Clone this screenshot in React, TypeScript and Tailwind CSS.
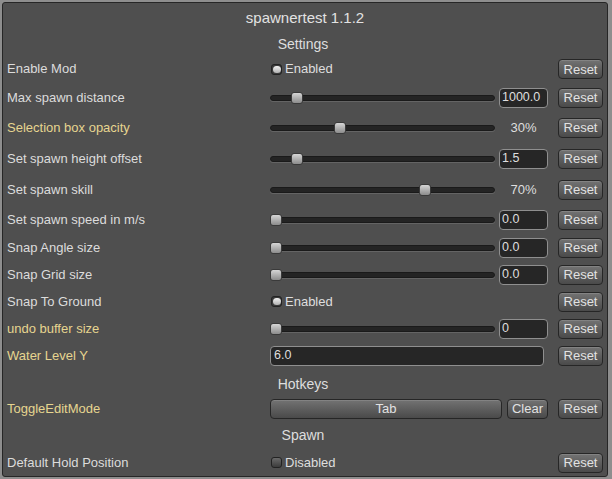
import React from "react";

type Row =
  | { kind: "toggle"; label: string; on: boolean; h: string; yellow?: boolean }
  | { kind: "slider"; label: string; pos: number; value: string; field: boolean; h: string; yellow?: boolean }
  | { kind: "text"; label: string; value: string; h: string; yellow?: boolean };

const settings: Row[] = [
  { kind: "toggle", label: "Enable Mod", on: true, h: "h-[28px]" },
  { kind: "slider", label: "Max spawn distance", pos: 0.1, value: "1000.0", field: true, h: "h-[29px]" },
  { kind: "slider", label: "Selection box opacity", pos: 0.3, value: "30%", field: false, h: "h-[31px]", yellow: true },
  { kind: "slider", label: "Set spawn height offset", pos: 0.1, value: "1.5", field: true, h: "h-[31px]" },
  { kind: "slider", label: "Set spawn skill", pos: 0.7, value: "70%", field: false, h: "h-[31px]" },
  { kind: "slider", label: "Set spawn speed in m/s", pos: 0, value: "0.0", field: true, h: "h-[29px]" },
  { kind: "slider", label: "Snap Angle size", pos: 0, value: "0.0", field: true, h: "h-[27px]" },
  { kind: "slider", label: "Snap Grid size", pos: 0, value: "0.0", field: true, h: "h-[27px]" },
  { kind: "toggle", label: "Snap To Ground", on: true, h: "h-[27px]" },
  { kind: "slider", label: "undo buffer size", pos: 0, value: "0", field: true, h: "h-[27px]", yellow: true },
  { kind: "text", label: "Water Level Y", value: "6.0", h: "h-[27px]", yellow: true },
];

const btn =
  "h-[20px] rounded-[4px] border border-[#262626] bg-gradient-to-b from-[#737373] to-[#4a4a4a] text-[13px] leading-none text-[#e2e2e2] shadow-[inset_0_1px_0_rgba(255,255,255,0.12)] flex items-center justify-center";

const field =
  "h-[20px] rounded-[4px] border border-[#8f8f8f] bg-[#262626] pl-[2px] text-[12.5px] leading-none text-[#dedede] flex items-center";

const ResetButton = () => <div className={`${btn} w-[45px]`}>Reset</div>;

const Checkbox = ({ on }: { on: boolean }) =>
  on ? (
    <div className="w-[11px] h-[11px] rounded-[3px] border border-[#222] bg-[#3a3a3a] flex items-center justify-center">
      <div className="w-[8px] h-[7px] rounded-full bg-gradient-to-b from-[#f2f2f2] to-[#b0b0b0]" />
    </div>
  ) : (
    <div className="w-[11px] h-[11px] rounded-[3px] border border-[#222] bg-gradient-to-b from-[#6a6a6a] to-[#3c3c3c]" />
  );

const Slider = ({ pos }: { pos: number }) => (
  <div className="relative w-[225px] h-[12px] flex items-center">
    <div className="w-full h-[6px] rounded-full bg-[#242424] border border-[#1a1a1a] shadow-[0_1px_0_rgba(255,255,255,0.12)]" />
    <div
      className="absolute top-0 w-[12px] h-[12px] rounded-[3px] border border-[#3a3a3a] bg-gradient-to-b from-[#d6d6d6] to-[#8c8c8c]"
      style={{ left: `${pos * 213}px` }}
    />
  </div>
);

const Label = ({ text, yellow }: { text: string; yellow?: boolean }) => (
  <div className={`w-[263px] text-[13px] ${yellow ? "text-[#e6d590]" : "text-[#dcdcdc]"}`}>{text}</div>
);

const Header = ({ text, h }: { text: string; h: string }) => (
  <div className={`${h} flex items-center justify-center pr-[4px] text-[14px] text-[#dedede]`}>{text}</div>
);

const SettingRow = ({ row }: { row: Row }) => (
  <div className={`${row.h} flex items-center pl-[4px]`}>
    <Label text={row.label} yellow={row.yellow} />
    <div className="w-[278px] flex items-center">
      {row.kind === "toggle" && (
        <div className="flex items-center gap-[3px] pl-[1px] text-[13px] text-[#dedede]">
          <Checkbox on={row.on} />
          <span>{row.on ? "Enabled" : "Disabled"}</span>
        </div>
      )}
      {row.kind === "slider" && (
        <>
          <Slider pos={row.pos} />
          {row.field ? (
            <div className={`${field} ml-[4px] w-[49px]`}>{row.value}</div>
          ) : (
            <div className="ml-[4px] w-[49px] text-center text-[13px] text-[#dedede]">{row.value}</div>
          )}
        </>
      )}
      {row.kind === "text" && <div className={`${field} w-[274px] pl-[3px]`}>{row.value}</div>}
    </div>
    <div className="ml-[10px]">
      <ResetButton />
    </div>
  </div>
);

export default function App() {
  return (
    <div
      className="w-[612px] h-[479px] bg-[#8e8e8e] p-[2px]"
      style={{ fontFamily: '"Liberation Sans", Arial, sans-serif' }}
    >
      <div className="w-[606px] h-[475px] rounded-[3px] border border-[#262626] bg-[#4f4f4f] flex flex-col">
        <div className="h-[30px] flex items-center justify-center text-[15px] text-[#e2e2e2]">spawnertest 1.1.2</div>
        <Header text="Settings" h="h-[22px]" />
        {settings.map((r) => (
          <SettingRow key={r.label} row={r} />
        ))}
        <Header text="Hotkeys" h="h-[27px] pt-[3px]" />
        <div className="h-[25px] flex items-center pl-[4px]">
          <Label text="ToggleEditMode" yellow />
          <div className="w-[278px] flex items-center">
            <div className={`${btn} w-[232px]`}>Tab</div>
            <div className={`${btn} ml-[5px] w-[41px]`}>Clear</div>
          </div>
          <div className="ml-[10px]">
            <ResetButton />
          </div>
        </div>
        <Header text="Spawn" h="h-[28px] pt-[1px]" />
        <SettingRow row={{ kind: "toggle", label: "Default Hold Position", on: false, h: "h-[27px]" }} />
      </div>
    </div>
  );
}
